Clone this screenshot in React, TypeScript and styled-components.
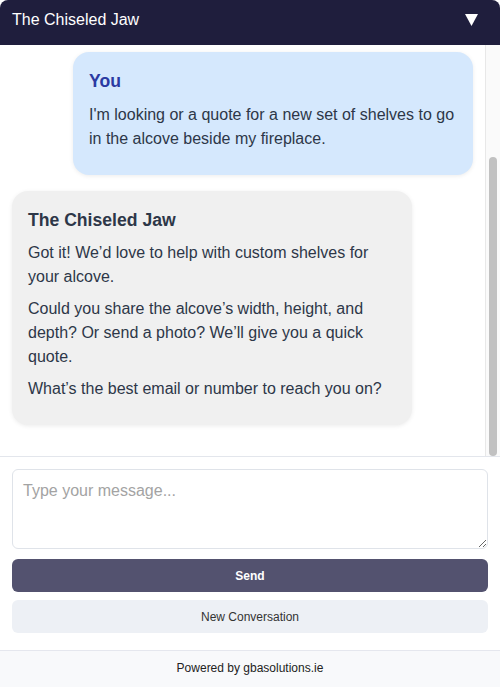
import React, { useLayoutEffect, useRef, useState } from 'react';
import styled, { createGlobalStyle } from 'styled-components';

const GlobalStyle = createGlobalStyle`
  html, body {
    margin: 0;
    padding: 0;
    background: #fff;
  }
  body {
    font-family: "Liberation Sans", Arial, Helvetica, sans-serif;
    color: #2d3748;
  }
  * {
    box-sizing: border-box;
  }
`;

const Widget = styled.div`
  width: 500px;
  height: 687px;
  display: flex;
  flex-direction: column;
  background: #fff;
  border-radius: 8px 8px 0 0;
  overflow: hidden;
`;

const Header = styled.header`
  height: 45px;
  flex-shrink: 0;
  background: #1f1e3d;
  color: #fff;
  display: flex;
  align-items: center;
  justify-content: space-between;
  padding: 0 22px 6px 12px;
  > .title {
    font-size: 16px;
    line-height: 24px;
  }
`;

const Toggle = styled.button`
  border: 0;
  background: none;
  padding: 0;
  display: flex;
  cursor: pointer;
`;

const Pane = styled.div`
  flex: 1 1 0;
  min-height: 0;
  display: flex;
`;

const Messages = styled.div`
  flex: 1;
  min-width: 0;
  overflow-y: auto;
  padding: 15px 12px;
  display: flex;
  flex-direction: column;
  scrollbar-width: none;
  &::-webkit-scrollbar {
    display: none;
  }
`;

const Rail = styled.div`
  width: 15px;
  flex-shrink: 0;
  background: #fafafa;
  border-left: 1px solid #e8e8e8;
  padding: 0 3px;
`;

const Thumb = styled.div`
  width: 8px;
  background: #c1c1c1;
  border-radius: 4px;
`;

const Bubble = styled.div<{ $mine?: boolean }>`
  max-width: 400px;
  flex-shrink: 0;
  align-self: ${p => (p.$mine ? 'flex-end' : 'flex-start')};
  background: ${p => (p.$mine ? '#d5e8fd' : '#f0f0f0')};
  border-radius: 16px;
  padding: 16px;
  margin-bottom: 16px;
  box-shadow: 0 1px 4px rgba(0, 0, 0, 0.08);
  font-size: 16px;
  line-height: 1.5;
  color: #2d3748;
  > h4 {
    margin: 0 0 8px;
    font-size: 17.6px;
    line-height: 1.5;
    font-weight: bold;
    color: ${p => (p.$mine ? '#2b3aa2' : '#2d3748')};
  }
  > p {
    margin: 0 0 8px;
  }
`;

const Composer = styled.section`
  flex-shrink: 0;
  border-top: 1px solid #e3e6ec;
  padding: 12px 12px 17px;
  display: flex;
  flex-direction: column;
`;

const Input = styled.textarea`
  display: block;
  width: 100%;
  height: 80px;
  margin: 0 0 10px;
  padding: 10px;
  border: 1px solid #dfe3e9;
  border-radius: 6px;
  font-family: "Liberation Sans", Arial, Helvetica, sans-serif;
  font-size: 16px;
  line-height: 1.4;
  color: #2d3748;
  &::placeholder {
    color: #a3a3a3;
  }
`;

const Button = styled.button<{ $primary?: boolean }>`
  display: block;
  width: 100%;
  height: 33px;
  border: 0;
  border-radius: 6px;
  font-family: "Liberation Sans", Arial, Helvetica, sans-serif;
  font-size: 12px;
  font-weight: ${p => (p.$primary ? 'bold' : 'normal')};
  background: ${p => (p.$primary ? '#53526f' : '#edf0f5')};
  color: ${p => (p.$primary ? '#fff' : '#333')};
  cursor: pointer;
  & + & {
    margin-top: 8px;
  }
`;

const Footer = styled.footer`
  flex-shrink: 0;
  height: 37px;
  border-top: 1px solid #e5e7ee;
  background: #f8f9fb;
  text-align: center;
  font-size: 12px;
  line-height: 16px;
  padding: 9px 0 11px;
  color: #222;
`;

function App() {
  const listRef = useRef<HTMLDivElement>(null);
  const [thumb, setThumb] = useState({ top: 0, height: 0 });

  useLayoutEffect(() => {
    const el = listRef.current;
    if (!el) return;
    el.scrollTop = el.scrollHeight;
    const h = el.clientHeight;
    const total = el.scrollHeight;
    setThumb({ top: (el.scrollTop / total) * h, height: (h / total) * h });
  }, []);

  return (
    <>
      <GlobalStyle />
      <Widget>
        <Header>
          <span className="title">The Chiseled Jaw</span>
          <Toggle aria-label="Minimise">
            <svg width="13" height="13" viewBox="0 0 13 13">
              <polygon points="0,1 13,1 6.5,13" fill="#fff" />
            </svg>
          </Toggle>
        </Header>
        <Pane>
          <Messages ref={listRef}>
            <Bubble>
              <h4>The Chiseled Jaw</h4>
              <p>Hi there! Thanks for getting in touch.</p>
              <p>How can we help you today?</p>
            </Bubble>
            <Bubble $mine>
              <h4>You</h4>
              <p>I'm looking or a quote for a new set of shelves to go in the alcove beside my fireplace.</p>
            </Bubble>
            <Bubble>
              <h4>The Chiseled Jaw</h4>
              <p>Got it! We’d love to help with custom shelves for your alcove.</p>
              <p>Could you share the alcove’s width, height, and depth? Or send a photo? We’ll give you a quick quote.</p>
              <p>What’s the best email or number to reach you on?</p>
            </Bubble>
          </Messages>
          <Rail>
            <Thumb style={{ marginTop: thumb.top, height: thumb.height }} />
          </Rail>
        </Pane>
        <Composer>
          <Input placeholder="Type your message..." />
          <Button $primary>Send</Button>
          <Button>New Conversation</Button>
        </Composer>
        <Footer>Powered by gbasolutions.ie</Footer>
      </Widget>
    </>
  );
}

export default App;
